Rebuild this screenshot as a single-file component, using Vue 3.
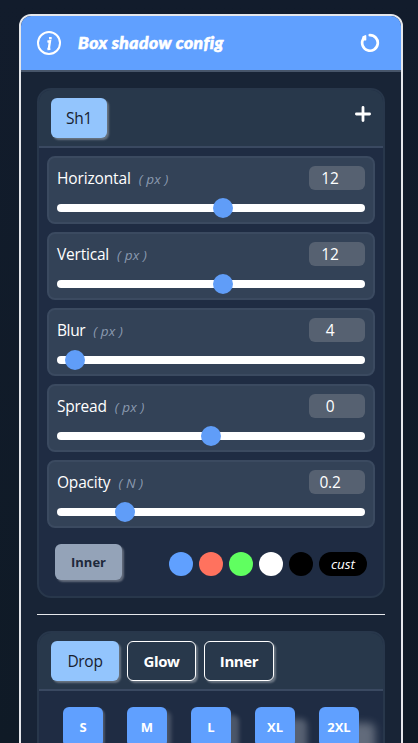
<script setup>
import { ref } from 'vue'

const sliders = ref([
  { label: 'Horizontal', unit: 'px', value: '12', pos: 156 / 288, cls: 'horizontal' },
  { label: 'Vertical', unit: 'px', value: '12', pos: 156 / 288, cls: 'vertical' },
  { label: 'Blur', unit: 'px', value: '4', pos: 8 / 288, cls: 'blur' },
  { label: 'Spread', unit: 'px', value: '0', pos: 0.5, cls: 'spread' },
  { label: 'Opacity', unit: 'N', value: '0.2', pos: 0.2, cls: 'opacity' },
])
const colors = ['blue', 'red', 'green', 'white', 'black']
const sizes = ['S', 'M', 'L', 'XL', '2XL']
</script>

<template>
  <div class="page">
    <main class="panel">
      <header class="top">
        <svg class="info" width="24" height="24" viewBox="0 0 24 24" fill="none" stroke="#fff">
          <circle cx="12" cy="12" r="11" stroke-width="2" />
          <path d="M10.4 10.6 L13 10.2 L11.7 18.2 M10.4 18.1 L13.4 17.8" stroke-width="2.3" />
          <path d="M12 7.3 L14.7 7.1" stroke-width="2.4" />
        </svg>
        <h1>Box shadow config</h1>
        <svg class="reset" width="20" height="20" viewBox="0 0 20 20" fill="none" stroke="#fff" stroke-linecap="round" stroke-linejoin="round">
          <path d="M9.8 2.1 A7.8 7.8 0 1 1 3.1 6.2" stroke-width="2.7" />
          <path d="M3.2 4.1 L5.4 3 L5.4 6.7 L3 6.7 Z" fill="#fff" stroke-width="1.8" />
        </svg>
      </header>

      <div class="content">
        <section class="card first">
          <div class="head">
            <button class="tab active sh">Sh1</button>
            <svg class="plus" width="16" height="16" viewBox="0 0 16 16" stroke="#fff" stroke-width="2.8" stroke-linecap="round">
              <path d="M8 1.4V14.6M1.4 8H14.6" />
            </svg>
          </div>
          <div class="body">
            <div v-for="s in sliders" :key="s.label" class="item">
              <div class="row">
                <span class="label" :class="s.cls">{{ s.label }}</span>
                <span class="unit">( {{ s.unit }} )</span>
                <span class="value"><span>{{ s.value }}</span></span>
              </div>
              <div class="track">
                <i class="thumb" :style="{ marginLeft: s.pos * 288 + 'px' }"></i>
              </div>
            </div>
            <div class="bottom">
              <button class="inner">Inner</button>
              <div class="colors">
                <i v-for="c in colors" :key="c" class="dot" :class="c"></i>
                <button class="cust">cust</button>
              </div>
            </div>
          </div>
        </section>

        <hr />

        <section class="card second">
          <div class="head">
            <button class="tab active drop">Drop</button>
            <button class="tab outline glow">Glow</button>
            <button class="tab outline inn">Inner</button>
          </div>
          <div class="sizes">
            <button v-for="z in sizes" :key="z" class="size" :class="'z' + z">{{ z }}</button>
          </div>
        </section>
      </div>
    </main>
  </div>
</template>

<style>
html, body { margin: 0; overflow: hidden; }
</style>

<style scoped>
* { box-sizing: border-box; }
.page {
  height: 743px;
  padding: 14px 15px 0 19px;
  overflow: hidden;
  background: linear-gradient(180deg, #121c2c, #0f1a26);
  font-family: "Open Sans", "Noto Sans", sans-serif;
  color: #fff;
}
button {
  border: 0;
  padding: 0;
  margin: 0;
  font-family: inherit;
  color: inherit;
  white-space: nowrap;
}
.panel {
  height: 900px;
  border: 2px solid #e5e7eb;
  border-radius: 12px;
  background: #182436;
  overflow: hidden;
}
.top {
  height: 56px;
  background: #60a0ff;
  border-bottom: 2px solid #475569;
  display: flex;
  align-items: center;
  padding: 0 21px 0 16px;
}
h1 {
  flex: 1;
  margin: 0 0 0 17px;
  font: italic 900 17.5px/24px Lato, sans-serif;
  letter-spacing: 0.45px;
  -webkit-text-stroke: 0.6px #fff;
  white-space: nowrap;
}
.reset { margin-top: -1px; }
.content { padding: 16px; }
.card {
  border: 2px solid #28374b;
  border-radius: 14px;
  background: #1f2c43;
  overflow: hidden;
}
.first { height: 510px; }
.second { height: 300px; }
.head {
  height: 58px;
  background: #28384b;
  border-bottom: 2px solid #3a4961;
  padding: 8px 12px;
  display: flex;
  gap: 8px;
}
.plus { margin: 8px 0 0 auto; }
.tab {
  height: 40px;
  border-radius: 6px;
  font-size: 15.5px;
  letter-spacing: -0.3px;
  line-height: 39px;
  box-shadow: 2px 2px 2px rgba(255, 255, 255, 0.3);
}
.active { background: #93c5fd; color: #18212f; }
.sh { width: 56px; }
.drop { width: 68px; }
.outline { border: 1px solid #fff; background: #28384b; font-weight: 700; font-size: 15px; letter-spacing: -0.4px; line-height: 38px; }
.glow { width: 69px; }
.inn { width: 70px; }
.body {
  padding: 8px;
  display: flex;
  flex-direction: column;
  gap: 8px;
}
.item {
  height: 68px;
  border: 2px solid #3b4a60;
  border-radius: 8px;
  background: #334257;
  padding: 8px;
}
.row { display: flex; height: 24px; line-height: 24px; }
.label { font-size: 15.5px; letter-spacing: -0.15px; white-space: nowrap; }
.vertical { letter-spacing: -0.2px; }
.blur { letter-spacing: -0.4px; }
.spread { letter-spacing: -0.25px; }
.opacity { letter-spacing: -0.2px; }
.unit {
  font-size: 13.5px;
  font-style: italic;
  color: #8b9ab0;
  letter-spacing: 0.15px;
  margin-left: 8px;
  padding-top: 1px;
  white-space: nowrap;
}
.value {
  margin-left: auto;
  width: 56px;
  height: 24px;
  border-radius: 6px;
  background: #566171;
  font-size: 15.5px;
  letter-spacing: -0.2px;
  text-align: center;
  padding-right: 14px;
}
.track {
  margin-top: 14px;
  height: 8px;
  border-radius: 4px;
  background: #fff;
  display: flex;
  align-items: center;
}
.thumb {
  width: 20px;
  height: 20px;
  border-radius: 50%;
  background: #609df8;
  flex: none;
}
.bottom {
  display: flex;
  justify-content: space-between;
  align-items: center;
  padding: 8px 8px 0;
}
.inner {
  width: 67px;
  height: 36px;
  border-radius: 6px;
  background: #94a3b8;
  color: #1e293b;
  font-size: 13px;
  font-weight: 700;
  box-shadow: 2px 2px 2px rgba(255, 255, 255, 0.3);
}
.colors { display: flex; gap: 6px; padding-top: 4px; }
.dot { width: 24px; height: 24px; border-radius: 50%; }
.blue { background: #60a0ff; }
.red { background: #ff725e; }
.green { background: #60ff60; }
.white { background: #fff; }
.black { background: #000; }
.cust {
  width: 48px;
  height: 24px;
  border-radius: 12px;
  background: #000;
  font-size: 13.5px;
  font-style: italic;
  line-height: 22px;
}
hr { height: 1px; border: 0; margin: 16px 0; background: #e5e7eb; }
.sizes { display: flex; gap: 24px; padding: 16px 24px; }
.size {
  width: 40px;
  height: 40px;
  flex: none;
  border-radius: 6px;
  background: #60a0ff;
  font-size: 13px;
  font-weight: 700;
}
.zS { box-shadow: 2px 2px 2px rgba(255, 255, 255, 0.2); }
.zM { box-shadow: 4px 4px 4px rgba(255, 255, 255, 0.2); }
.zL { box-shadow: 8px 8px 4px rgba(255, 255, 255, 0.2); }
.zXL { box-shadow: 12px 12px 6px rgba(255, 255, 255, 0.25); }
.z2XL { box-shadow: 16px 16px 8px rgba(255, 255, 255, 0.3); }
</style>
